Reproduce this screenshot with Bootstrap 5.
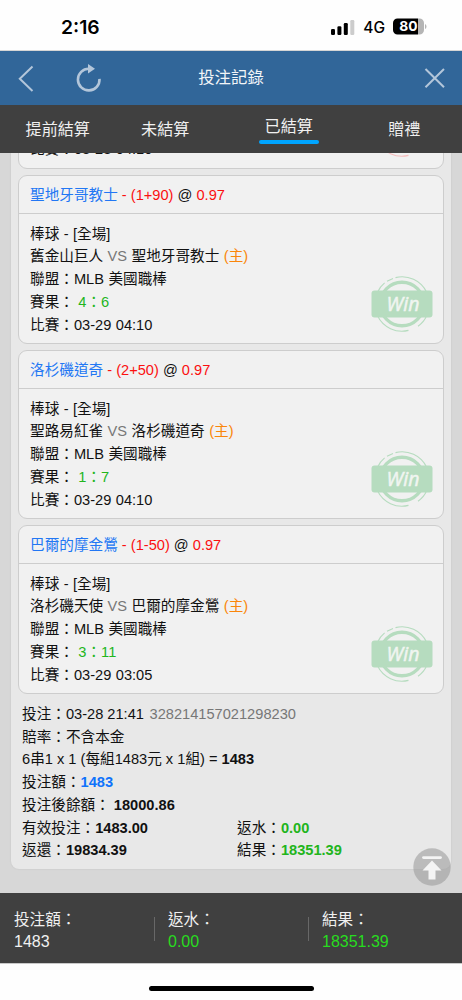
<!DOCTYPE html>
<html lang="zh-Hant">
<head>
<meta charset="utf-8">
<meta name="viewport" content="width=device-width, initial-scale=1">
<title>投注記錄</title>
<link href="https://cdn.jsdelivr.net/npm/bootstrap@5.3.0/dist/css/bootstrap.min.css" rel="stylesheet">
<style>
  body { font-family: "Liberation Sans", "Noto Sans CJK TC", sans-serif; font-size: 14.64px; line-height: 22.7px; color: #111; background: #fefefe; }
  .phone { height: 1000px; }
  .status-row { height: 51px; border-bottom: 1px solid #d5d5d5; padding: 4px 35px 0 61px; font-family: Inter, sans-serif; color: #000; }
  .clock { font-size: 19.3px; font-weight: 600; }
  .net { font-size: 15.5px; font-weight: 500; margin: 2px 8px 0; }
  .title-row { height: 54px; background: #316699; color: #f2f5f8; display: grid; grid-template-columns: 1fr auto 1fr; font-size: 16.4px; }
  .title-row span { margin-top: -2px; }
  .tab-row { height: 48px; background: #404040; font-size: 16.1px; }
  .tab-row .nav-link { color: #f0f0f0; padding: 0; line-height: 24px; }
  .tab-line { display: block; height: 4px; width: 60px; border-radius: 2px; background: #00a5ff; margin-top: 2px; }
  .feed { background: #d7d7d7; padding: 0 11px 24px; min-height: 0; }
  .slip { background: #e8e8e8; border-radius: 8px; padding: 0 7px 7px; box-shadow: 0 0 2px rgba(0,0,0,.09); }
  .bet { background: #f1f1f1; border: 1px solid #cdcdcd; border-radius: 9px; margin-bottom: 6px; word-spacing: .4px; }
  .bet .card-header { background: none; height: 38px; padding: 0 11px; line-height: 38px; border-bottom: 1px solid #cdcdcd; word-spacing: 0; }
  .bet .card-body { padding: 9px 11px 6px; height: 129px; }
  .bet.cut { height: 60px; }
  .bet.cut .card-body { padding: 5px 11px 7px; height: 58px; }
  .team { color: #2277f4; } .neg { color: #fb1010; } .home { color: #fa860b; } .grn { color: #22b51c; } .dim { color: #777; } .azure { color: #0f73fb; }
  .stamp { position: absolute; right: 10px; bottom: 11px; color: #b6dcbf; }
  .stamp text { font: italic 400 19.5px "Open Sans", "Noto Sans", sans-serif; fill: #f1f5f1; stroke: #f1f5f1; stroke-width: .5px; }
  .stamp.lost { color: #f5bcbc; }
  .totals { padding: 3.3px 4px 0; }
  .totals .half { width: 215px; }
  .serial { margin-left: 1.5px; }
  .sumbar { height: 71px; background: #404040; color: #f0f0f0; font-size: 15.6px; line-height: 22px; padding-top: 16px; border-bottom: 1px solid #c8c8c8; }
  .sumbar .cell { width: 154px; padding-left: 14px; position: relative; }
  .sumbar .cell + .cell::before { content: ""; position: absolute; left: 0; top: 8px; height: 24px; border-left: 1px solid #686868; }
  .sumbar .num { font-size: 16px; } .lime { color: #28dc1f; }
  .to-top { position: absolute; right: 11px; bottom: 7px; }
  .home-area { height: 36px; }
  .home-bar { width: 165px; height: 5px; border-radius: 3px; background: #000; margin-top: 22px; }
</style>
</head>
<body>
<svg class="d-none">
  <symbol id="ring" viewBox="0 0 62 56">
    <g fill="none" stroke="currentColor">
      <circle cx="31" cy="28" r="21.8" stroke-width="3.4"/>
      <path d="M24.5 1.6A27.2 27.2 0 0 1 55.5 16M22 2.400L16 5.200M13.600 6.800Q9 10.600 6.600 16M6.600 40A27.200 27.200 0 0 0 37.500 54.400M47 50.200Q53 46 55.500 40" stroke-width="1.100"/>
    </g>
    <rect x=".5" y="14.5" width="61" height="27" rx="3" fill="currentColor"/>
  </symbol>
</svg>
<div class="phone d-flex flex-column overflow-hidden">
  <div class="status-row d-flex align-items-center justify-content-between flex-shrink-0">
    <span class="clock">2:16</span>
    <span class="d-flex align-items-center">
      <svg width="24" height="16" viewBox="0 0 24 16"><rect x="0" y="10" width="4" height="6" rx="1.2"/><rect x="6.4" y="7.2" width="4" height="8.8" rx="1.2"/><rect x="12.8" y="4" width="4" height="12" rx="1.2"/><rect x="19.3" y="1" width="4" height="15" rx="1.2" fill="#ccc"/></svg>
      <span class="net">4G</span>
      <svg width="34" height="17" viewBox="0 0 34 17"><path d="M4.500.5H25V16.500H4.500A4.500 4.500 0 0 1 0 12V5A4.500 4.500 0 0 1 4.500.5"/><path d="M25 .5h1.500A4.500 4.500 0 0 1 31 5v7a4.500 4.500 0 0 1-4.500 4.500H25zM32 6q1.500.5 1.500 2.500T32 11z" fill="#b5b5b5"/><text x="15.500" y="13.300" text-anchor="middle" font-size="13.800" font-weight="700" fill="#fff">80</text></svg>
    </span>
  </div>
  <header class="title-row align-items-center flex-shrink-0">
    <div class="d-flex align-items-center">
      <svg class="ms-3" width="90" height="34" viewBox="16 60 90 34" fill="none" stroke="#b3c6da"><path d="M32.500 65.500L19.800 77.800L32.500 90" stroke-width="2"/><path d="M99.500 77.800A10.800 10.800 0 1 1 89 67.800" stroke-width="2.600"/><path d="M88 63l7 4.700l-7 4.700z" fill="#b3c6da" stroke="none"/></svg>
    </div>
    <span>投注記錄</span>
    <svg class="ms-auto" width="45" height="34" viewBox="417 61 45 34" fill="none" stroke="#b3c6da" stroke-width="2"><path d="M425.500 69L444 87.300M444 69L425.500 87.300"/></svg>
  </header>
  <nav class="tab-row nav nav-fill flex-nowrap align-items-center flex-shrink-0">
    <div class="col-3 text-center"><a class="nav-link">提前結算</a></div>
    <div class="col-3 text-center pe-3"><a class="nav-link">未結算</a></div>
    <div class="col-3 d-flex flex-column align-items-center"><a class="nav-link">已結算</a><span class="tab-line"></span></div>
    <div class="col-3 text-center"><a class="nav-link">贈禮</a></div>
  </nav>
  <main class="feed flex-grow-1 d-flex flex-column justify-content-end overflow-hidden position-relative">
    <section class="slip flex-shrink-0">
      <article class="card bet cut">
        <div class="card-body d-flex flex-column justify-content-end"><div>比賽：03-28 04:10</div></div>
        <svg class="stamp lost" width="62" height="56"><use href="#ring"/></svg>
      </article>
      <article class="card bet">
        <div class="card-header"><span class="team">聖地牙哥教士</span> <span class="neg">- (1+90)</span> @ <span class="neg">0.97</span></div>
        <div class="card-body">
          <div>棒球 - [全場]</div>
          <div>舊金山巨人 <span class="dim">VS</span> 聖地牙哥教士 <span class="home">(主)</span></div>
          <div>聯盟：MLB 美國職棒</div>
          <div>賽果： <span class="grn">4：6</span></div>
          <div>比賽：03-29 04:10</div>
        </div>
        <svg class="stamp" width="62" height="56"><use href="#ring"/><text x="32" y="35" text-anchor="middle">Win</text></svg>
      </article>
      <article class="card bet">
        <div class="card-header"><span class="team">洛杉磯道奇</span> <span class="neg">- (2+50)</span> @ <span class="neg">0.97</span></div>
        <div class="card-body">
          <div>棒球 - [全場]</div>
          <div>聖路易紅雀 <span class="dim">VS</span> 洛杉磯道奇 <span class="home">(主)</span></div>
          <div>聯盟：MLB 美國職棒</div>
          <div>賽果： <span class="grn">1：7</span></div>
          <div>比賽：03-29 04:10</div>
        </div>
        <svg class="stamp" width="62" height="56"><use href="#ring"/><text x="32" y="35" text-anchor="middle">Win</text></svg>
      </article>
      <article class="card bet">
        <div class="card-header"><span class="team">巴爾的摩金鶯</span> <span class="neg">- (1-50)</span> @ <span class="neg">0.97</span></div>
        <div class="card-body">
          <div>棒球 - [全場]</div>
          <div>洛杉磯天使 <span class="dim">VS</span> 巴爾的摩金鶯 <span class="home">(主)</span></div>
          <div>聯盟：MLB 美國職棒</div>
          <div>賽果： <span class="grn">3：11</span></div>
          <div>比賽：03-29 03:05</div>
        </div>
        <svg class="stamp" width="62" height="56"><use href="#ring"/><text x="32" y="35" text-anchor="middle">Win</text></svg>
      </article>
      <div class="totals">
        <div>投注：03-28 21:41 <span class="dim serial">328214157021298230</span></div>
        <div>賠率：不含本金</div>
        <div>6串1 x 1 (每組1483元 x 1組) = <b>1483</b></div>
        <div>投注額：<b class="azure">1483</b></div>
        <div>投注後餘額： <b>18000.86</b></div>
        <div class="d-flex"><span class="half">有效投注：<b>1483.00</b></span><span>返水：<b class="grn">0.00</b></span></div>
        <div class="d-flex"><span class="half">返還：<b>19834.39</b></span><span>結果：<b class="grn">18351.39</b></span></div>
      </div>
    </section>
    <svg class="to-top" width="38" height="38" viewBox="0 0 38 38"><circle cx="19" cy="19" r="18.700" fill="#9b9b9b" fill-opacity=".58"/><path d="M10.500 9.600H27.500" stroke="#f4f4f4" stroke-width="2.800" stroke-linecap="round"/><path d="M19 12.500L28.500 22.500H22.500V31.500H15.500V22.500H9.500Z" fill="#f4f4f4"/></svg>
  </main>
  <footer class="sumbar d-flex flex-shrink-0">
    <div class="cell"><div>投注額：</div><div class="num">1483</div></div>
    <div class="cell"><div>返水：</div><div class="num lime">0.00</div></div>
    <div class="cell"><div>結果：</div><div class="num lime">18351.39</div></div>
  </footer>
  <div class="home-area d-flex justify-content-center flex-shrink-0"><div class="home-bar"></div></div>
</div>
<script src="https://cdn.jsdelivr.net/npm/bootstrap@5.3.0/dist/js/bootstrap.bundle.min.js"></script>
</body>
</html>
